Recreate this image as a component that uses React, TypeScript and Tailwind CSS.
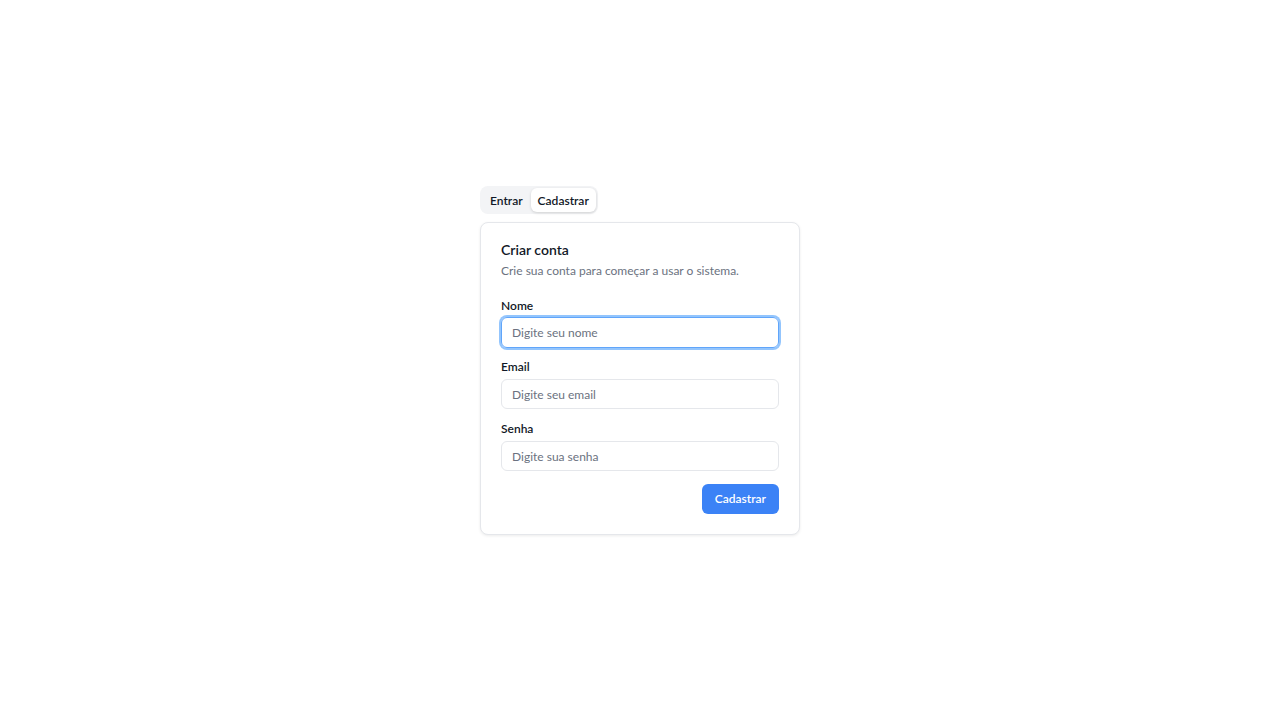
import React from "react";

export default function App() {
  return (
    <div className="min-h-[720px] w-full bg-white flex justify-center pt-[186px]" style={{ fontFamily: "Lato, 'Noto Sans', sans-serif" }}>
      <div className="w-[320px] flex flex-col">
        <div className="self-start flex items-center bg-[#f3f4f6] rounded-lg p-[2px] h-[28px]">
          <button className="h-[24px] px-[8px] pt-[2px] text-[12px] font-semibold text-[#111827] rounded-md">Entrar</button>
          <button className="h-[24px] px-[7px] pt-[2px] text-[12px] font-semibold text-[#111827] rounded-md bg-white shadow-[0_1px_3px_rgba(0,0,0,0.15)]">Cadastrar</button>
        </div>
        <div className="mt-[8px] border border-[#e5e7eb] rounded-lg bg-white shadow-[0_1px_3px_rgba(0,0,0,0.08)] px-[20px] pt-[17px] pb-[20px]">
          <h2 className="text-[14px] font-semibold text-[#111827] leading-[20px]">Criar conta</h2>
          <p className="mt-[3px] text-[12px] text-[#6b7280] leading-[16px]">Crie sua conta para começar a usar o sistema.</p>
          <div className="mt-[19px] flex flex-col">
            <label className="text-[12px] font-semibold text-[#111827] leading-[16px]">Nome</label>
            <input
              placeholder="Digite seu nome"
              className="mt-[3px] h-[31px] w-full rounded-md border border-[#60a5fa] ring-2 ring-[#93c5fd] px-[10px] text-[12px] placeholder:text-[#6b7280] outline-none"
            />
            <label className="mt-[11px] text-[12px] font-semibold text-[#111827] leading-[16px]">Email</label>
            <input
              placeholder="Digite seu email"
              className="mt-[4px] h-[30px] w-full rounded-md border border-[#e5e7eb] px-[10px] text-[12px] placeholder:text-[#6b7280] outline-none"
            />
            <label className="mt-[12px] text-[12px] font-semibold text-[#111827] leading-[16px]">Senha</label>
            <input
              placeholder="Digite sua senha"
              className="mt-[4px] h-[30px] w-full rounded-md border border-[#e5e7eb] px-[10px] text-[12px] placeholder:text-[#6b7280] outline-none"
            />
            <div className="mt-[13px] flex justify-end">
              <button className="h-[30px] px-[13px] rounded-md bg-[#3b82f6] text-white text-[12px] font-semibold">Cadastrar</button>
            </div>
          </div>
        </div>
      </div>
    </div>
  );
}
